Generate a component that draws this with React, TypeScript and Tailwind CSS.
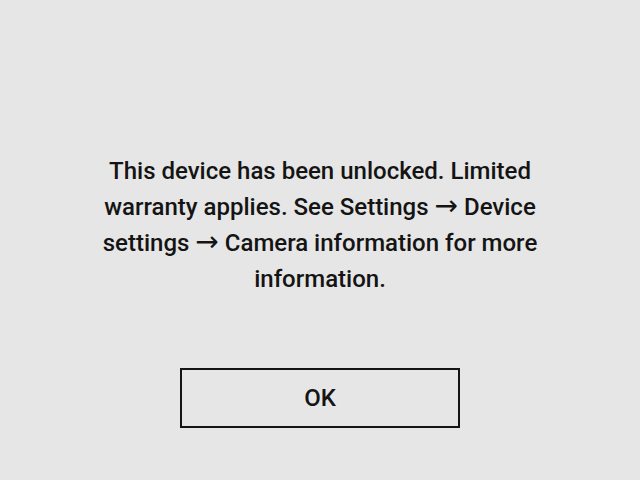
function Arrow() {
  return <span className="font-['DejaVu_Sans',sans-serif] font-normal text-[28px] leading-none">→</span>;
}

export default function App() {
  return (
    <div className="w-[640px] h-[480px] bg-[#e6e6e6] flex flex-col items-center font-['Roboto',sans-serif]">
      <div className="mt-[153px] w-[450px] text-center text-[24px] font-medium leading-[36px] text-[#141414]">
        This device has been unlocked. Limited warranty applies. See Settings <Arrow /> Device settings <Arrow /> Camera information for more information.
      </div>
      <div className="mt-[71px] w-[280px] h-[60px] border-2 border-[#141414] flex items-center justify-center text-[24px] font-medium text-[#141414]">
        OK
      </div>
    </div>
  );
}
